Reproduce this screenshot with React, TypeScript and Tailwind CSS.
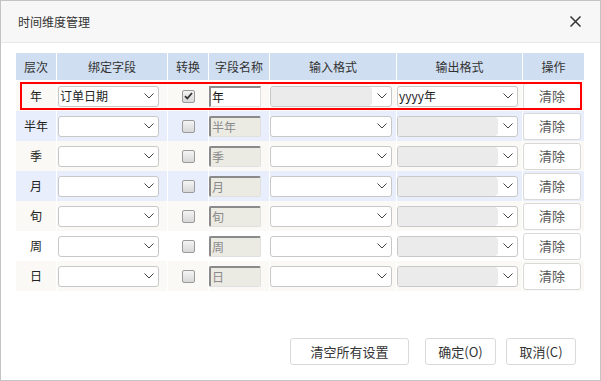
import React from 'react'

const font = { fontFamily: '"Noto Sans CJK SC", "Noto Sans", sans-serif' }

type Row = {
  level: string
  bind: string
  checked: boolean
  name: string
  inputDisabled: boolean
  output: string
  bg: string
}

const rows: Row[] = [
  { level: '年', bind: '订单日期', checked: true, name: '年', inputDisabled: true, output: 'yyyy年', bg: 'bg-[#faf9f5]' },
  { level: '半年', bind: '', checked: false, name: '半年', inputDisabled: false, output: '', bg: 'bg-[#e9eefc]' },
  { level: '季', bind: '', checked: false, name: '季', inputDisabled: false, output: '', bg: 'bg-[#faf9f5]' },
  { level: '月', bind: '', checked: false, name: '月', inputDisabled: false, output: '', bg: 'bg-[#e9eefc]' },
  { level: '旬', bind: '', checked: false, name: '旬', inputDisabled: false, output: '', bg: 'bg-[#faf9f5]' },
  { level: '周', bind: '', checked: false, name: '周', inputDisabled: false, output: '', bg: 'bg-white' },
  { level: '日', bind: '', checked: false, name: '日', inputDisabled: false, output: '', bg: 'bg-[#faf9f5]' },
]

function Chevron() {
  return (
    <svg width="10" height="6" viewBox="0 0 10 6" className="shrink-0">
      <polyline points="0.5,0.5 5,5 9.5,0.5" fill="none" stroke="#444" strokeWidth="1" />
    </svg>
  )
}

function Select({ value, disabled, width }: { value: string; disabled?: boolean; width: string }) {
  return (
    <div className={`${width} h-[21px] flex items-center rounded-[3px] border border-[#c8c8c8] bg-white overflow-hidden`}>
      <div className={`flex-1 h-full flex items-center pl-[1px] text-[12px] text-[#222] ${disabled ? 'bg-[#ebebeb] rounded-r-[4px]' : ''}`}>
        {value}
      </div>
      <div className="w-[19px] h-full flex items-center justify-center">
        <Chevron />
      </div>
    </div>
  )
}

function Checkbox({ checked }: { checked: boolean }) {
  return (
    <div className="w-[13px] h-[13px] rounded-[2px] border border-[#9a9a9a] bg-gradient-to-b from-[#f4f4f4] to-[#d8d8d8] flex items-center justify-center">
      {checked && (
        <svg width="9" height="8" viewBox="0 0 9 8">
          <polyline points="1,4.2 3.3,6.5 8,1" fill="none" stroke="#333" strokeWidth="1.8" />
        </svg>
      )}
    </div>
  )
}

function NameInput({ value, enabled }: { value: string; enabled: boolean }) {
  return (
    <div
      className={`w-[52px] h-[21px] flex items-center pl-[1px] text-[12px] border-t-2 border-l-2 border-r border-b border-t-[#8a8a8a] border-l-[#8a8a8a] border-r-[#e0e0e0] border-b-[#e0e0e0] ${
        enabled ? 'bg-white text-[#111]' : 'bg-[#ebebe4] text-[#8a8a8a] rounded-[2px]'
      }`}
    >
      {value}
    </div>
  )
}

function Button({ children, width }: { children: React.ReactNode; width: string }) {
  return (
    <button className={`${width} h-[27px] rounded-[3px] border border-[#d9d9d9] bg-white text-[12px] text-[#333]`}>
      {children}
    </button>
  )
}

const cols = 'grid grid-cols-[40px_110px_40px_60px_126px_125px_61px] gap-x-[1px]'

export default function App() {
  return (
    <div style={font} className="w-[601px] h-[381px] bg-white border border-[#c4c4c4] flex flex-col overflow-hidden">
      {/* Title bar */}
      <div className="h-[42px] shrink-0 bg-[#f7f7f7] border-b border-[#e8e8e8] flex items-center justify-between pl-[17px] pr-[19px]">
        <span className="text-[12px] text-[#333]">时间维度管理</span>
        <svg width="11" height="11" viewBox="0 0 11 11">
          <path d="M0.5 0.5 L10.5 10.5 M10.5 0.5 L0.5 10.5" stroke="#333" strokeWidth="1.5" />
        </svg>
      </div>

      {/* Table */}
      <div className="relative mt-[10px] ml-[15px] w-[568px]">
        <div className={`${cols} h-[27px] text-[12px] text-[#333]`}>
          {['层次', '绑定字段', '转换', '字段名称', '输入格式', '输出格式', '操作'].map((h) => (
            <div key={h} className="bg-[#cfdef0] flex items-center justify-center">
              {h}
            </div>
          ))}
        </div>
        <div className="mt-[1px]">
          {rows.map((r, i) => (
            <div key={r.level} className={`${cols} h-[30px] text-[12px] text-[#222]`}>
              <div className={`${r.bg} flex items-center justify-center`}>{r.level}</div>
              <div className={`${r.bg} flex items-center pl-[1px]`}>
                <Select value={r.bind} width="w-[101px]" />
              </div>
              <div className={`${r.bg} flex items-center justify-center`}>
                <Checkbox checked={r.checked} />
              </div>
              <div className={`${r.bg} flex items-center`}>
                <NameInput value={r.name} enabled={i === 0} />
              </div>
              <div className={`${r.bg} flex items-center`}>
                <Select value="" disabled={r.inputDisabled} width="w-[122px]" />
              </div>
              <div className={`${r.bg} flex items-center`}>
                <Select value={r.output} disabled={i !== 0} width="w-[121px]" />
              </div>
              <div className={`${r.bg} flex items-center`}>
                <Button width="w-[58px]">
                  <span className="text-[13px] text-[#555]">清除</span>
                </Button>
              </div>
            </div>
          ))}
        </div>
        {/* Highlight of the selected row */}
        <div className="absolute left-[4px] top-[29px] w-[562px] h-[28px] border-2 border-[#ff0000] pointer-events-none" />
      </div>

      {/* Footer */}
      <div className="mt-auto mb-[15px] flex justify-end gap-[10px] pr-[24px]">
        <Button width="w-[119px] mr-[6px]">
          <span className="text-[13px]">清空所有设置</span>
        </Button>
        <Button width="w-[71px]">
          <span className="text-[13px]">确定(O)</span>
        </Button>
        <Button width="w-[70px]">
          <span className="text-[13px]">取消(C)</span>
        </Button>
      </div>
    </div>
  )
}
